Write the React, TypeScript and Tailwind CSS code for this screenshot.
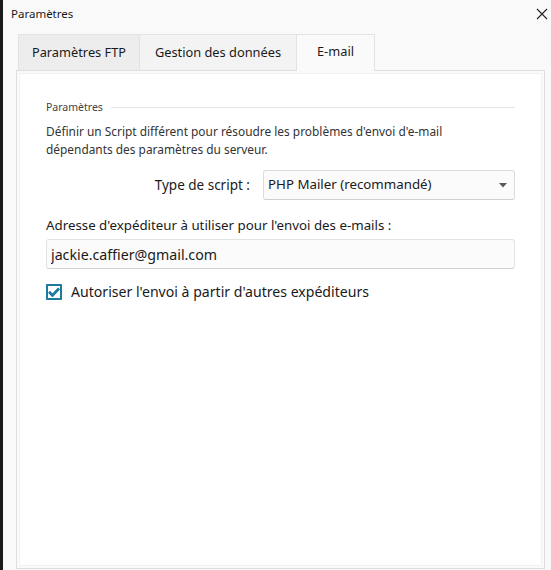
import React, { useState } from 'react';

export default function App() {
  const [allowOthers, setAllowOthers] = useState(true);
  const [email, setEmail] = useState('jackie.caffier@gmail.com');

  return (
    <div
      className="w-[551px] h-[570px] flex bg-[#f9f9f9] text-[#1a1a1a] overflow-hidden"
      style={{ fontFamily: '"Noto Sans", "Open Sans", sans-serif' }}
    >
      <div className="w-[3px] bg-[#1a1a1a]" />
      <div className="flex-1 flex flex-col">
        {/* title bar */}
        <div className="h-[33px] flex items-start justify-between pl-[8px] pr-[3px] pt-[5px]">
          <span className="text-[11.5px] leading-[18px]">Paramètres</span>
          <svg width="12" height="12" viewBox="0 0 12 12" className="mt-[3px]" fill="none" stroke="#222" strokeWidth="1.1">
            <path d="M1 1 L11 11 M11 1 L1 11" />
          </svg>
        </div>

        {/* tabs */}
        <div className="flex pl-[15px] h-[37px] items-end">
          <div className="h-[36px] w-[122px] flex items-center justify-center bg-[#ededed] border border-[#e3e3e3] border-b-0 text-[12.8px]">
            Paramètres FTP
          </div>
          <div className="h-[36px] w-[157px] flex items-center justify-center bg-[#f3f3f3] border-t border-r border-[#e3e3e3] text-[12.8px]">
            Gestion des données
          </div>
          <div className="h-[37px] w-[78px] flex items-center justify-center bg-[#fafafa] border-t border-r border-[#e3e3e3] text-[12.8px] pb-[3px] -mb-px relative z-10">
            E-mail
          </div>
        </div>

        {/* panel */}
        <div className="ml-[13px] mr-[6px] flex-1 border border-[#dedede] bg-[#fafafa] p-[2px] mb-[1px]">
          <div className="h-full bg-white pl-[26px] pr-[26px] pt-[26px] border border-[#f2f2f2]">
            <div className="flex items-center gap-[8px]">
              <span className="text-[10.5px] text-[#444] leading-[14px]">Paramètres</span>
              <div className="flex-1 h-px bg-[#e6e6e6]" />
            </div>

            <p className="mt-[8px] text-[11.9px] leading-[18px] text-[#333]">
              Définir un Script différent pour résoudre les problèmes d'envoi d'e-mail
              <br />
              dépendants des paramètres du serveur.
            </p>

            <div className="mt-[12px] flex items-center justify-end gap-[13px]">
              <span className="text-[13.5px]">Type de script :</span>
              <button className="w-[252px] h-[30px] flex items-center justify-between pl-[4px] pr-[7px] rounded-[3px] border border-[#dcdcdc] border-b-[#cfcfcf] bg-[#fbfbfb] text-[13.3px] text-left">
                <span>PHP Mailer (recommandé)</span>
                <svg width="8" height="5" viewBox="0 0 8 5">
                  <path d="M0 0 H8 L4 4.5 Z" fill="#5a5a5a" />
                </svg>
              </button>
            </div>

            <label className="block mt-[15px] text-[13.3px] leading-[20px]">
              Adresse d'expéditeur à utiliser pour l'envoi des e-mails :
            </label>
            <input
              value={email}
              onChange={(e) => setEmail(e.target.value)}
              className="mt-[4px] w-full h-[30px] px-[4px] rounded-[3px] border border-[#e3e3e3] border-b-[#d2d2d2] bg-[#fbfbfb] text-[14.2px] outline-none"
            />

            <label className="mt-[12px] flex items-center gap-[9px] cursor-pointer">
              <span
                onClick={() => setAllowOthers(!allowOthers)}
                className="w-[16px] h-[16px] border-2 border-[#1b7a9e] rounded-[1px] flex items-center justify-center bg-white"
              >
                {allowOthers && (
                  <svg width="12" height="10" viewBox="0 0 12 10">
                    <path d="M1 4.8 L4.4 8.4 L11 1.4" fill="none" stroke="#1b7a9e" strokeWidth="2.8" />
                  </svg>
                )}
              </span>
              <span className="text-[14.1px]">Autoriser l'envoi à partir d'autres expéditeurs</span>
            </label>
          </div>
        </div>
      </div>
    </div>
  );
}
